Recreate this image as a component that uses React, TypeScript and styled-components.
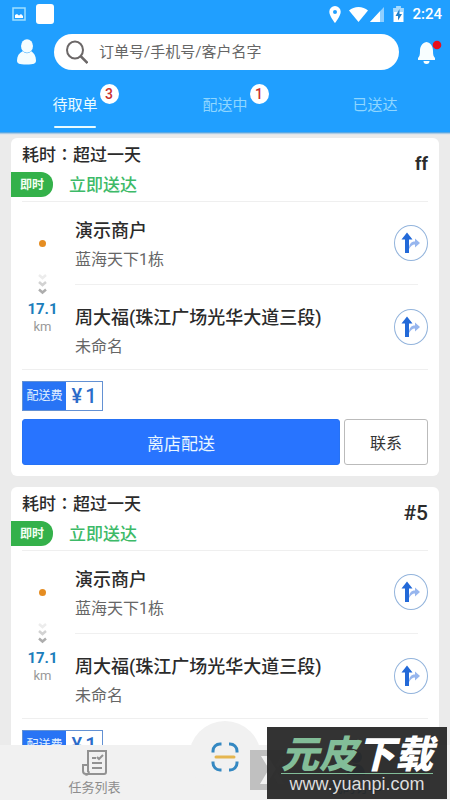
import React from "react";
import styled, { createGlobalStyle } from "styled-components";

const GlobalStyle = createGlobalStyle`
  *, *::before, *::after { box-sizing: border-box; }
  body { margin: 0; background: #ebebeb; font-family: Roboto, "Noto Sans CJK SC", sans-serif; color: #2b2b2b; }
  button, input { font: inherit; color: inherit; }
  button { padding: 0; border: 0; background: none; cursor: pointer; }
  h2, h3, p, ul { margin: 0; padding: 0; }
  svg { display: block; flex: none; }
`;

const Shell = styled.div`
  display: flex;
  flex-direction: column;
  height: 100vh;
  overflow: hidden;
`;

const Header = styled.header`
  flex: none;
  background: #209fff;
  color: #fff;
  border-bottom: 1px solid #5aa9e4;
  box-shadow: 0 1px 1px #a9cbe6;
`;

const StatusBar = styled.div`
  display: flex;
  align-items: center;
  gap: 10px;
  height: 28px;
  padding: 0 8px 0 12px;
`;

const AppSquare = styled.span`
  width: 18px;
  height: 20px;
  border-radius: 3px;
  background: #fff;
`;

const StatusRight = styled.div`
  display: flex;
  align-items: center;
  gap: 8px;
  margin-left: auto;
`;

const Clock = styled.time`
  font-size: 15px;
  line-height: 20px;
  font-weight: 500;
`;

const SearchRow = styled.div`
  display: flex;
  align-items: center;
  height: 48px;
  padding: 0 8px 0 16px;
`;

const SearchBox = styled.label`
  flex: 1;
  display: flex;
  align-items: center;
  gap: 11px;
  height: 36px;
  margin: 0 18px 0 17px;
  padding: 0 12px;
  border-radius: 18px;
  background: #fff;
  color: #666;
`;

const SearchInput = styled.input`
  flex: 1;
  min-width: 0;
  padding: 0;
  border: 0;
  outline: 0;
  background: none;
  font-size: 15px;
  line-height: 22px;
  &::placeholder { color: #666; opacity: 1; }
`;

const Tabs = styled.nav`
  display: grid;
  grid-template-columns: repeat(3, 1fr);
  height: 56px;
`;

const Tab = styled.button<{ $active?: boolean }>`
  display: flex;
  flex-direction: column;
  align-items: center;
  padding-top: 18px;
  font-size: 15px;
  line-height: 22px;
  color: ${(p) => (p.$active ? "#e9fbff" : "#8fd6ff")};
  &::after {
    content: "";
    width: 42px;
    height: 2px;
    margin-top: 10px;
    border-radius: 1px;
    background: ${(p) => (p.$active ? "#e9fbff" : "transparent")};
  }
`;

const TabLabel = styled.span`
  position: relative;
`;

const Count = styled.span`
  position: absolute;
  left: 100%;
  bottom: 12px;
  width: 19px;
  height: 20px;
  margin-left: 2px;
  border-radius: 50%;
  background: #fff;
  color: #c93030;
  font-size: 14px;
  line-height: 20px;
  font-weight: 500;
  text-align: center;
`;

const List = styled.main`
  flex: 1;
  min-height: 0;
  display: flex;
  flex-direction: column;
  gap: 11px;
  padding: 5px 11px 0;
  overflow: auto;
  scrollbar-width: none;
`;

const Card = styled.article`
  flex: none;
  padding: 0 11px 11px;
  border-radius: 6px;
  background: #fff;
`;

const CardHead = styled.div`
  display: flex;
  justify-content: space-between;
  align-items: center;
  height: 64px;
  border-bottom: 1px solid #efefef;
`;

const Elapsed = styled.h2`
  margin-bottom: 3px;
  font-size: 17px;
  line-height: 26px;
  font-weight: 500;
`;

const Colon = styled.span`
  font-family: "Noto Sans CJK TC", sans-serif;
`;

const TypeRow = styled.div`
  display: flex;
  align-items: center;
  gap: 16px;
  margin-left: -11px;
`;

const TypeTag = styled.span`
  width: 42px;
  height: 25px;
  padding-left: 9px;
  border-radius: 0 12px 12px 0;
  background: #34b14a;
  color: #f2fff2;
  font-size: 12px;
  line-height: 26px;
  font-weight: 700;
`;

const TypeText = styled.span`
  padding-top: 2px;
  color: #3dba68;
  font-size: 17px;
  line-height: 25px;
  font-weight: 500;
`;

const OrderNo = styled.strong<{ $large?: boolean }>`
  margin-bottom: 12px;
  font-size: ${(p) => (p.$large ? 21 : 18)}px;
  line-height: 24px;
  font-weight: ${(p) => (p.$large ? 500 : 700)};
`;

const Route = styled.div`
  display: grid;
  grid-template-columns: 41px 1fr;
  column-gap: 12px;
  border-bottom: 1px solid #efefef;
`;

const Track = styled.div`
  display: flex;
  flex-direction: column;
  align-items: center;
  padding-top: 38px;
`;

const Dot = styled.span`
  width: 7px;
  height: 7px;
  margin-bottom: 26px;
  border-radius: 50%;
  background: #e58d22;
`;

const Distance = styled.span`
  margin-top: 4px;
  color: #1c7dbb;
  font-size: 15px;
  line-height: 20px;
  font-weight: 700;
`;

const Unit = styled.span`
  color: #999;
  font-size: 13px;
  line-height: 16px;
`;

const Stop = styled.section<{ $end?: boolean }>`
  display: flex;
  align-items: center;
  justify-content: space-between;
  height: ${(p) => (p.$end ? 84 : 82)}px;
`;

const StopText = styled.div<{ $end?: boolean }>`
  padding-top: ${(p) => (p.$end ? 8 : 2)}px;
`;

const StopDivider = styled.div`
  height: 1px;
  margin-right: 10px;
  background: #f0f0f0;
`;

const StopName = styled.h3`
  margin-bottom: 3px;
  font-size: 18px;
  line-height: 28px;
  font-weight: 500;
`;

const StopAddress = styled.p`
  color: #666;
  font-size: 16px;
  line-height: 24px;
`;

const NavigateButton = styled.button`
  display: flex;
  align-items: center;
  justify-content: center;
  width: 34px;
  height: 36px;
  border: 1px solid #93b4dc;
  border-radius: 50%;
`;

const Fee = styled.div`
  display: flex;
  width: 81px;
  height: 30px;
  margin: 11px 0 8px;
  border: 1px solid #6391d3;
  line-height: 28px;
`;

const FeeLabel = styled.span`
  flex: none;
  width: 43px;
  background: #2874f5;
  color: #e3f1ff;
  font-size: 12px;
  text-align: center;
`;

const FeeAmount = styled.strong`
  flex: 1;
  display: flex;
  justify-content: center;
  gap: 3px;
  color: #2c6cc9;
  font-size: 20px;
  font-weight: 500;
`;

const Actions = styled.div`
  display: grid;
  grid-template-columns: 1fr 84px;
  gap: 4px;
`;

const ActionButton = styled.button<{ $primary?: boolean }>`
  height: 46px;
  border: 1px solid ${(p) => (p.$primary ? "#2672f5" : "#bbb")};
  border-radius: 3px;
  background: ${(p) => (p.$primary ? "#2874ff" : "#fff")};
  color: ${(p) => (p.$primary ? "#e9f6ff" : "#333")};
  font-size: ${(p) => (p.$primary ? 17 : 16)}px;
`;

const BottomNav = styled.nav`
  position: relative;
  flex: none;
  display: grid;
  grid-template-columns: 1fr 72px 1fr;
  height: 55px;
  background: #f1f1f1;
`;

const NavItem = styled.button<{ $active?: boolean }>`
  display: flex;
  flex-direction: column;
  align-items: center;
  gap: 3px;
  padding-top: 5px;
  color: ${(p) => (p.$active ? "#1d7ec0" : "#8d8d8d")};
  font-size: 13px;
  line-height: 18px;
`;

const ScanButton = styled.button`
  display: flex;
  align-items: center;
  justify-content: center;
  width: 72px;
  height: 72px;
  margin-top: -24px;
  border-radius: 50%;
  background: #f1f1f1;
`;

const SideLabel = styled.div`
  position: absolute;
  right: 20px;
  bottom: 10px;
  display: flex;
  align-items: center;
  width: 180px;
  height: 40px;
  padding-left: 10px;
  background: rgba(120, 120, 120, 0.4);
`;

const SiteMark = styled.aside`
  position: absolute;
  right: 3px;
  bottom: 1px;
  display: flex;
  flex-direction: column;
  align-items: center;
  width: 180px;
  height: 72px;
  padding-top: 6px;
  background: rgba(38, 38, 38, 0.94);
  color: #fff;
`;

const SiteName = styled.div`
  height: 40px;
  font-family: "Noto Sans CJK SC", sans-serif;
  font-size: 38px;
  line-height: 38px;
  font-weight: 900;
  font-style: italic;
  white-space: nowrap;
`;

const SiteAccent = styled.span`
  color: #82bd98;
`;

const SiteUrl = styled.div`
  width: 152px;
  border-top: 1px solid #82bd98;
  color: #ddd;
  font-family: "Liberation Sans", sans-serif;
  font-size: 18px;
  line-height: 20px;
  text-align: center;
`;

const TurnIcon = () => (
  <svg width="22" height="24" viewBox="0 0 22 24" aria-hidden="true">
    <path d="M9 18c0-5 2-7.500 6-7.500V7.500l5 4.500-5 4.500v-3c-3 0-4 1.500-6 4.500z" fill="#97b6ee" />
    <path d="M1.500 8.500 7 1.500l5.500 7H9V22H5V8.500z" fill="#2269d8" />
  </svg>
);

const Chevrons = () => (
  <svg width="9" height="22" viewBox="0 0 9 22" fill="none" strokeWidth="2.500" aria-hidden="true">
    <path d="m1 2 3.500 3L8 2" stroke="#ececec" />
    <path d="m1 9 3.500 3L8 9" stroke="#d2d2d2" />
    <path d="m1 16.500 3.500 3 3.500-3" stroke="#adadad" />
  </svg>
);

const orders = [
  { id: "ff", large: false },
  { id: "#5", large: true },
];

const OrderCard = ({ id, large }: { id: string; large: boolean }) => (
  <Card>
    <CardHead>
      <div>
        <Elapsed>耗时<Colon lang="zh-TW">：</Colon>超过一天</Elapsed>
        <TypeRow>
          <TypeTag>即时</TypeTag>
          <TypeText>立即送达</TypeText>
        </TypeRow>
      </div>
      <OrderNo $large={large}>{id}</OrderNo>
    </CardHead>
    <Route>
      <Track>
        <Dot />
        <Chevrons />
        <Distance>17.1</Distance>
        <Unit>km</Unit>
      </Track>
      <div>
        <Stop>
          <StopText>
            <StopName>演示商户</StopName>
            <StopAddress>蓝海天下1栋</StopAddress>
          </StopText>
          <NavigateButton aria-label="导航"><TurnIcon /></NavigateButton>
        </Stop>
        <StopDivider />
        <Stop $end>
          <StopText $end>
            <StopName>周大福(珠江广场光华大道三段)</StopName>
            <StopAddress>未命名</StopAddress>
          </StopText>
          <NavigateButton aria-label="导航"><TurnIcon /></NavigateButton>
        </Stop>
      </div>
    </Route>
    <Fee>
      <FeeLabel>配送费</FeeLabel>
      <FeeAmount><span>¥</span><span>1</span></FeeAmount>
    </Fee>
    <Actions>
      <ActionButton $primary>离店配送</ActionButton>
      <ActionButton>联系</ActionButton>
    </Actions>
  </Card>
);

export default function App() {
  return (
    <>
      <GlobalStyle />
      <Shell>
        <Header>
          <StatusBar>
            <svg width="14" height="14" viewBox="0 0 14 14" aria-hidden="true">
              <path d="M1 1h12v12H1z" fill="none" stroke="#9fe0ff" strokeWidth="1.500" />
              <path d="M3 11V8l2-1 2 1.500L9 7l2 2v2z" fill="#fff" />
            </svg>
            <AppSquare />
            <StatusRight>
              <svg width="12" height="17" viewBox="0 0 12 17" aria-hidden="true">
                <path d="M6 0a5.700 5.700 0 0 0-5.700 5.700C.3 10 6 17 6 17s5.700-7 5.700-11.300A5.700 5.700 0 0 0 6 0zm0 8a2 2 0 1 1 0-4 2 2 0 0 1 0 4z" fill="#fff" />
              </svg>
              <svg width="36" height="17" viewBox="0 0 36 17" aria-hidden="true">
                <path d="M0 4.500C5-.2 14-.2 19 4.500L9.500 16z" fill="#fff" />
                <path d="M35 1v15H21z" fill="#8fcfff" />
                <path d="M31 5.300V16H21z" fill="#fff" />
              </svg>
              <svg width="11" height="18" viewBox="0 0 11 18" aria-hidden="true">
                <path d="M3.500 1h4v2H10.500v14H.5V3h3z" fill="#fff" />
                <path d="M.5 3H3.500V1h4v2h3v4H.5z" fill="#a6dbff" />
                <path d="M6.500 4 2.500 11h2.500v4.500L9 9H6.500z" fill="#1d7fcb" />
              </svg>
              <Clock>2:24</Clock>
            </StatusRight>
          </StatusBar>
          <SearchRow>
            <svg width="21" height="26" viewBox="0 0 21 26" fill="#f4fdff" aria-hidden="true">
              <ellipse cx="11" cy="7" rx="6" ry="6.800" />
              <path d="M7 12C3 14 1 17 1 21.500c0 3 2 4 9.500 4s9.500-1 9.500-4C20 17 18 14 15 12c-2 3-6 3-8 0z" />
            </svg>
            <SearchBox>
              <svg width="22" height="24" viewBox="0 0 22 24" fill="none" stroke="#6b6767" strokeWidth="2" aria-hidden="true">
                <ellipse cx="9" cy="10" rx="8" ry="8.500" />
                <path d="m14.500 16 7 7" strokeWidth="2.500" />
              </svg>
              <SearchInput aria-label="搜索订单" placeholder="订单号/手机号/客户名字" />
            </SearchBox>
            <svg width="25" height="26" viewBox="0 0 25 26" aria-hidden="true">
              <path d="M9.500 3c5 1 6.500 5 6.500 9 0 4 .5 5.500 2 7V21H1v-2c1.500-1.500 2-3 2-7 0-4 1.500-8 6.500-9z" fill="#f8feff" />
              <path d="M6.500 22h6a3 3 0 0 1-6 0z" fill="#f8feff" />
              <circle cx="20" cy="6" r="4.300" fill="#e80f1c" />
            </svg>
          </SearchRow>
          <Tabs>
            <Tab $active><TabLabel>待取单<Count>3</Count></TabLabel></Tab>
            <Tab><TabLabel>配送中<Count>1</Count></TabLabel></Tab>
            <Tab><TabLabel>已送达</TabLabel></Tab>
          </Tabs>
        </Header>
        <List>
          {orders.map((o) => <OrderCard key={o.id} {...o} />)}
        </List>
        <BottomNav>
          <NavItem>
            <svg width="26" height="26" viewBox="0 0 26 26" fill="none" stroke="#929292" strokeWidth="2" aria-hidden="true">
              <path d="M6 22V1h18v21a2 2 0 0 1-2 2H4a3 3 0 0 1-3-3v-6h5M6 21a2 2 0 0 1-3 3" />
              <path d="M10 8h4M10 13h10M10 18h10M15 7l2 2 4-4" />
            </svg>
            任务列表
          </NavItem>
          <ScanButton aria-label="扫码">
            <svg width="28" height="30" viewBox="0 0 28 30" fill="none" strokeWidth="3" aria-hidden="true">
              <path d="M2 10.500V9a7 7 0 0 1 7-7h1.500M18 2h1a7 7 0 0 1 7 7v1.500M26 19.500V21a7 7 0 0 1-7 7h-1M10.500 28H9a7 7 0 0 1-7-7v-1.500" stroke="#3488c2" />
              <path d="M5 15h18" stroke="#e5b650" strokeLinecap="round" />
            </svg>
          </ScanButton>
          <NavItem $active>
            <svg width="20" height="26" viewBox="0 0 20 26" fill="#1d7ec0" aria-hidden="true">
              <circle cx="10" cy="7" r="6" />
              <path d="M1 25c0-7 4-11 9-11s9 4 9 11z" />
            </svg>
            我的订单
          </NavItem>
          <SideLabel>
            <svg width="26" height="30" viewBox="0 0 26 30" fill="#f2f2f2" aria-hidden="true">
              <path d="M1 1h7l8 13-9 15H0l9-15z" />
              <path d="M21 1h4l-7 12-2-3zM17 17l7 12h-6l-4-7z" opacity="0.5" />
            </svg>
          </SideLabel>
          <SiteMark>
            <SiteName><SiteAccent>元皮</SiteAccent>下载</SiteName>
            <SiteUrl>www.yuanpi.com</SiteUrl>
          </SiteMark>
        </BottomNav>
      </Shell>
    </>
  );
}
